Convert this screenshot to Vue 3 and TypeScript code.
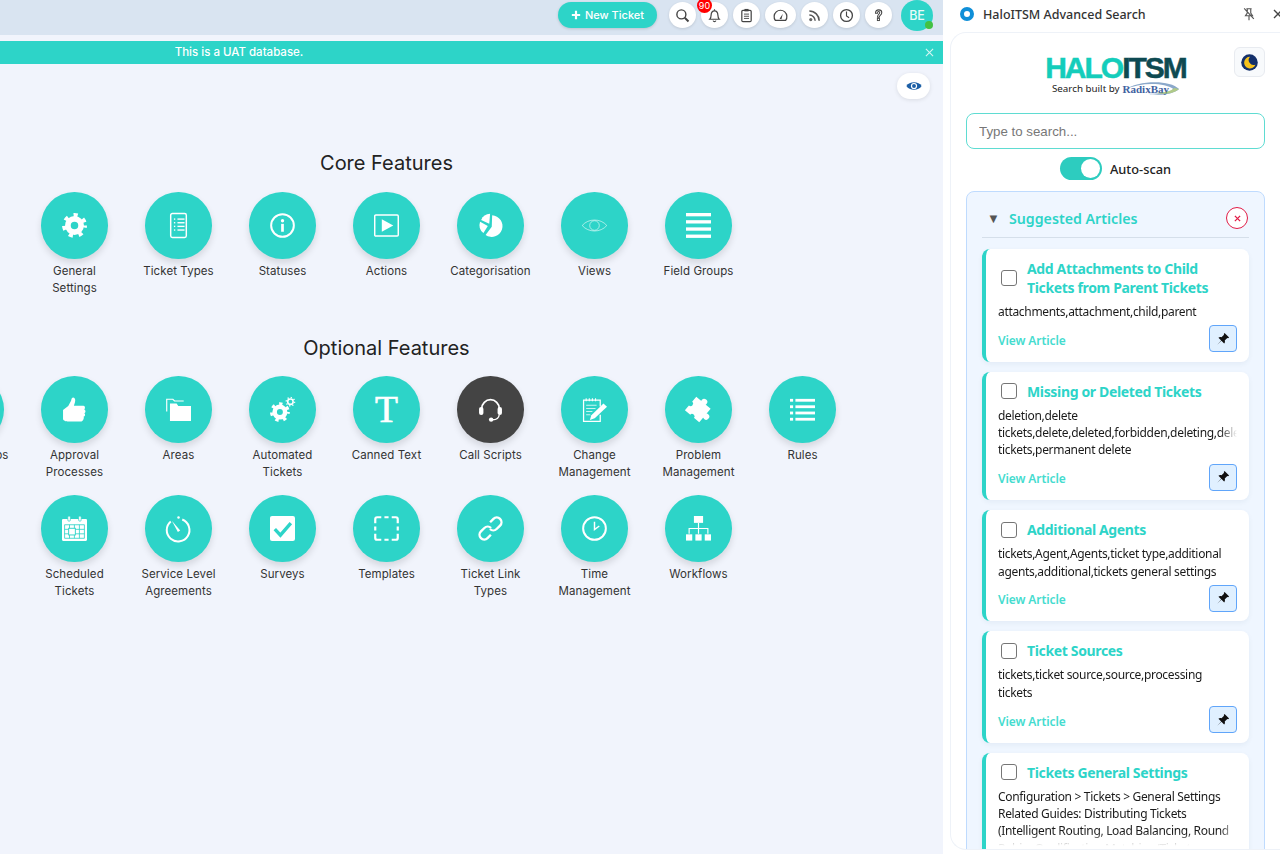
<script setup lang="ts">
// Tiles are drawn from one table; svg bodies live in `icons`
const gear = (cx: number, cy: number, r: number) => {
  const teeth = r * 1.32
  const dash = (2 * Math.PI * teeth) / 16
  return `<circle cx="${cx}" cy="${cy}" r="${r * 0.72}" fill="none" stroke="#fff" stroke-width="${r * 0.62}"/>
    <circle cx="${cx}" cy="${cy}" r="${teeth * 0.82}" fill="none" stroke="#fff" stroke-width="${r * 0.55}" stroke-dasharray="${dash * 0.82} ${dash * 1.18}" stroke-dashoffset="${dash * 0.41}"/>`
}

const listLines = (x: number, w: number, ys: number[], h = 1) =>
  ys
    .map(
      (y) =>
        `<rect x="${x}" y="${y}" width="${h + 0.4}" height="${h + 0.4}" fill="#fff"/><rect x="${x + 3.4}" y="${y}" width="${w}" height="${h + 0.4}" fill="#fff"/>`,
    )
    .join('')

const icons: Record<string, string> = {
  gear: gear(12, 12, 8.8),
  doc: `<rect x="4.5" y="0.500" width="15" height="23" rx="1.6" fill="none" stroke="#fff" stroke-width="1.4"/>${listLines(7.6, 6.8, [5.2, 8.7, 12.2, 15.7], 0.9)}`,
  info: `<circle cx="12" cy="12" r="10.9" fill="none" stroke="#fff" stroke-width="1.9"/><circle cx="12" cy="7.4" r="1.6" fill="#fff"/><rect x="10.7" y="10.4" width="2.6" height="7.6" fill="#fff"/>`,
  play: `<rect x="0.700" y="2" width="22.600" height="20" rx="1" fill="none" stroke="#fff" stroke-width="1.4"/><path d="M7.5 6 18.500 12 7.5 18Z" fill="#fff"/>`,
  pie: `<path d="M13.6 2.2A10.4 10.4 0 1 1 7.3 21.2L13.2 13.2Z" fill="#fff"/><path d="M11.6 0.6 10.8 10.4 3 6.6A9.8 9.8 0 0 1 11.6 0.6Z" fill="#fff"/><path d="M2 8.4 9.4 12.4 5.2 19.3A10 10 0 0 1 2 8.4Z" fill="#fff"/>`,
  eye: `<path d="M.2 12C6 5 18 5 23.8 12 18 19 6 19 .2 12Z" fill="none" stroke="#fff" stroke-opacity=".6" stroke-width=".9"/><circle cx="12" cy="12" r="4.6" fill="none" stroke="#fff" stroke-opacity=".6" stroke-width=".9"/>`,
  bars: `<rect x="0" y="0" width="24" height="3.200" fill="#fff"/><rect x="0" y="6.900" width="24" height="3.200" fill="#fff"/><rect x="0" y="13.800" width="24" height="3.200" fill="#fff"/><rect x="0" y="20.700" width="24" height="3.200" fill="#fff"/>`,
  thumb: `<path d="M1 12.5 6 8.6 8.7 3.5C9 1.6 9.7.4 10.8.4 12.6.6 13.2 3 12.4 5.2L11.4 8.4H20.6C22.4 8.6 22.4 11.2 21.4 12 23 12.8 22.800 15 21.500 15.500 22.700 16.400 22.200 18.500 20.800 18.800 21.400 20.400 20.200 23.400 18.600 23.400H6.500C3.600 23.400 1 22.600 1 21Z" fill="#fff"/>`,
  folders: `<path d="M.7 14V2.2H6.6L8.2 3.8H17" fill="none" stroke="#fff" stroke-width="1.1"/><path d="M3.8 23V6.2H10.2L11.8 8.6H24V23Z" fill="#fff"/>`,
  gears: `${gear(9.5, 14.5, 7)}<circle cx="19.6" cy="4.500" r="2.600" fill="none" stroke="#fff" stroke-width="1.500"/><circle cx="19.6" cy="4.500" r="4" fill="none" stroke="#fff" stroke-width="1.300" stroke-dasharray="1.2 1.9"/>`,
  serifT: `<text x="12" y="24" text-anchor="middle" font-family="Liberation Serif, serif" font-size="36" fill="#fff" stroke="#fff" stroke-width=".7">T</text>`,
  headset: `<path d="M3.600 15V11A8.400 8.400 0 0 1 20.400 11V15" fill="none" stroke="#fff" stroke-width="1.700"/><rect x="1" y="9.500" width="4.200" height="7.800" rx="2" fill="#fff"/><rect x="18.800" y="9.500" width="4.200" height="7.800" rx="2" fill="#fff"/><path d="M20.400 17C20 20.400 17.600 21.800 14 21.800" fill="none" stroke="#fff" stroke-width="1.300"/><circle cx="12.600" cy="21.700" r="2.100" fill="#fff"/>`,
  notepad: `<path d="M17.500 9V3H1.500V23.500H17.500V17" fill="none" stroke="#fff" stroke-width="1.200"/><path d="M4 1.200V4M7 1.200V4M10 1.200V4M13 1.200V4" stroke="#fff" stroke-width="1"/><path d="M4 8H14M4 11H13M4 14H10M4 17H8" stroke="#fff" stroke-opacity=".75" stroke-width="1"/><path d="M20.600 6.200 24 9.400 12.200 20.400 7.600 22 9 17.400Z" fill="#fff"/>`,
  puzzle: `<g transform="rotate(40 12 12)"><rect x="2.500" y="4" width="18" height="17" fill="#fff"/><circle cx="11.500" cy="3" r="3" fill="#fff"/><circle cx="22" cy="12.500" r="3" fill="#fff"/><circle cx="2.500" cy="12.500" r="2.400" fill="#2dd4c8"/><circle cx="11.500" cy="21" r="2.400" fill="#2dd4c8"/></g>`,
  list: `<rect x="0" y="1.800" width="3" height="2.700" fill="#fff"/><rect x="5.200" y="1.800" width="18.800" height="2.700" fill="#fff"/><rect x="0" y="8" width="3" height="2.700" fill="#fff"/><rect x="5.200" y="8" width="18.800" height="2.700" fill="#fff"/><rect x="0" y="14" width="3" height="2.700" fill="#fff"/><rect x="5.200" y="14" width="18.800" height="2.700" fill="#fff"/><rect x="0" y="20" width="3" height="2.700" fill="#fff"/><rect x="5.200" y="20" width="18.800" height="2.700" fill="#fff"/>`,
  calendar: `<path d="M1.500 2.800H22.500A1.300 1.300 0 0 1 24 4.200V22.400A1.300 1.300 0 0 1 22.500 24H1.500A1.300 1.300 0 0 1 0 22.400V4.200A1.300 1.300 0 0 1 1.500 2.800Z" fill="#fff"/><rect x="5.600" y="0" width="2.400" height="5" rx="1.100" fill="#fff" stroke="#2dd4c8" stroke-width=".7"/><rect x="16" y="0" width="2.400" height="5" rx="1.100" fill="#fff" stroke="#2dd4c8" stroke-width=".7"/><path d="M2.500 8.400H21.500V21.400H2.500ZM2.500 12.800H21.500M2.500 17.100H21.500M7.200 8.400V21.400M11.900 8.400V21.400M16.700 8.400V21.400" fill="none" stroke="#2dd4c8" stroke-width=".8"/><rect x="6.400" y="11.800" width="6.400" height="6.400" fill="#fff" stroke="#2dd4c8" stroke-width=".9"/>`,
  stopwatch: `<path d="M15.600 2.600A10.900 10.900 0 1 1 4.600 4.400" fill="none" stroke="#fff" stroke-width="1.900" transform="translate(0 .8)"/><circle cx="12" cy="1.500" r="1.200" fill="#fff"/><path d="M5.600 4.600 13.600 14 11.400 15.400Z" fill="#fff"/>`,
  check: `<rect x="0" y="0" width="24" height="24" rx="2" fill="#fff"/><path d="M4.600 12.600 10 18.400 20 6.800" fill="none" stroke="#2dd4c8" stroke-width="3.200"/>`,
  dashed: `<path d="M1.200 7V3A1.800 1.800 0 0 1 3 1.200H7M10 1.200H14M17 1.200H21A1.800 1.800 0 0 1 22.800 3V7M22.800 10V14M22.800 17V21A1.800 1.800 0 0 1 21 22.800H17M14 22.800H10M7 22.800H3A1.800 1.800 0 0 1 1.200 21V17M1.200 14V10" fill="none" stroke="#fff" stroke-width="2.100"/>`,
  link: `<g fill="none" stroke="#fff" stroke-width="2.300" transform="rotate(-45 12 12)"><path d="M12.700 12A4.500 4.500 0 0 0 8.200 7.500H3.500A4.500 4.500 0 0 0 3.500 16.500H8"/><path d="M11.300 12A4.500 4.500 0 0 0 15.800 16.500H20.500A4.500 4.500 0 0 0 20.500 7.500H16"/></g>`,
  clock: `<circle cx="12" cy="12" r="10.900" fill="none" stroke="#fff" stroke-width="1.900"/><path d="M12 5.400V13L16.600 9.600" fill="none" stroke="#fff" stroke-width="1.400"/>`,
  org: `<rect x="7.600" y="0" width="8.800" height="6.600" fill="#fff"/><path d="M12 6.600V12M3 17V12H21V17M12 12V17" fill="none" stroke="#fff" stroke-width="1.100"/><rect x="0" y="17.600" width="6" height="6" fill="#fff"/><rect x="9" y="17.600" width="6" height="6" fill="#fff"/><rect x="18" y="17.600" width="6" height="6" fill="#fff"/>`,
}

type Tile = { label: string; icon: string; dark?: boolean }

const coreFeatures: Tile[] = [
  { label: 'General Settings', icon: 'gear' },
  { label: 'Ticket Types', icon: 'doc' },
  { label: 'Statuses', icon: 'info' },
  { label: 'Actions', icon: 'play' },
  { label: 'Categorisation', icon: 'pie' },
  { label: 'Views', icon: 'eye' },
  { label: 'Field Groups', icon: 'bars' },
]

const optionalRows: Tile[][] = [
  [
    { label: 'Agent Groups', icon: 'gear' },
    { label: 'Approval Processes', icon: 'thumb' },
    { label: 'Areas', icon: 'folders' },
    { label: 'Automated Tickets', icon: 'gears' },
    { label: 'Canned Text', icon: 'serifT' },
    { label: 'Call Scripts', icon: 'headset', dark: true },
    { label: 'Change Management', icon: 'notepad' },
    { label: 'Problem Management', icon: 'puzzle' },
    { label: 'Rules', icon: 'list' },
  ],
  [
    { label: 'Scheduled Tickets', icon: 'calendar' },
    { label: 'Service Level Agreements', icon: 'stopwatch' },
    { label: 'Surveys', icon: 'check' },
    { label: 'Templates', icon: 'dashed' },
    { label: 'Ticket Link Types', icon: 'link' },
    { label: 'Time Management', icon: 'clock' },
    { label: 'Workflows', icon: 'org' },
  ],
]

const articles = [
  { title: 'Add Attachments to Child Tickets from Parent Tickets', tags: 'attachments,attachment,child,parent' },
  {
    title: 'Missing or Deleted Tickets',
    tags: 'deletion,delete tickets,delete,deleted,forbidden,deleting,deleted tickets,permanent delete',
  },
  { title: 'Additional Agents', tags: 'tickets,Agent,Agents,ticket type,additional agents,additional,tickets general settings' },
  { title: 'Ticket Sources', tags: 'tickets,ticket source,source,processing tickets' },
  {
    title: 'Tickets General Settings',
    tags: 'Configuration > Tickets > General Settings Related Guides: Distributing Tickets (Intelligent Routing, Load Balancing, Round Robin, Qualification Matching/Ticket Assignment)',
  },
]
</script>

<template>
  <div class="app">
    <main class="main">
      <header class="topbar">
        <button class="new-ticket" type="button">
          <svg viewBox="0 0 12 12" width="10" height="10"><path d="M6 1v10M1 6h10" stroke="#fff" stroke-width="2.600" /></svg>
          New Ticket
        </button>
        <div class="tools">
          <span class="tool">
            <svg viewBox="0 0 16 16"><circle cx="6.800" cy="6.800" r="4.800" fill="none" stroke="#444" stroke-width="1.500" /><path d="M10.400 10.400 14.400 14.400" stroke="#444" stroke-width="2" /></svg>
          </span>
          <span class="tool">
            <svg viewBox="0 0 16 16"><path d="M3 12c1.200-1.200 1.300-2.600 1.400-4.600C4.500 4.600 6 3 8 3s3.500 1.600 3.600 4.400c.1 2 .2 3.400 1.400 4.600Z" fill="none" stroke="#444" stroke-width="1.300" /><path d="M6.500 13.500a1.600 1.600 0 0 0 3 0M8 1.300V3" fill="none" stroke="#444" stroke-width="1.200" /></svg>
            <span class="badge">90</span>
          </span>
          <span class="tool">
            <svg viewBox="0 0 16 16"><rect x="3" y="2.500" width="10" height="12" rx="1.200" fill="none" stroke="#444" stroke-width="1.300" /><rect x="5.800" y="1" width="4.400" height="2.600" fill="#444" /><path d="M5.300 6.500h5.400M5.300 8.800h5.400M5.300 11.100h5.400" stroke="#444" stroke-width="1" /></svg>
          </span>
          <span class="tool wide">
            <svg viewBox="0 0 16 16"><path d="M2.500 13.200A6.800 6.800 0 1 1 13.500 13.200Z" fill="none" stroke="#444" stroke-width="1.300" /><path d="M7 11.500 10.500 6 9 12Z" fill="#444" /></svg>
          </span>
          <span class="tool">
            <svg viewBox="0 0 16 16"><circle cx="4" cy="12.300" r="1.700" fill="#666" /><path d="M2.500 7.500a6.200 6.200 0 0 1 6.200 6.200M2.500 3.200a10.500 10.500 0 0 1 10.500 10.500" fill="none" stroke="#555" stroke-width="1.600" /></svg>
          </span>
          <span class="tool">
            <svg viewBox="0 0 16 16"><circle cx="8" cy="8" r="6.300" fill="none" stroke="#444" stroke-width="1.400" /><path d="M8 3.800V8.500L10.800 10.300" fill="none" stroke="#444" stroke-width="1.200" /></svg>
          </span>
          <span class="tool">
            <svg viewBox="0 0 16 16"><path d="M4.800 5.600C4.800 3.300 6.400 2 8.200 2c2 0 3.300 1.300 3.300 3 0 2.500-2.700 2.700-2.700 4.800H6.900C6.900 7 9.300 6.500 9.300 5 9.300 4.300 8.800 3.800 8.100 3.800 7.300 3.800 6.900 4.500 6.900 5.600Z" fill="none" stroke="#444" stroke-width="1.100" /><rect x="6.800" y="11" width="2.200" height="2.400" fill="none" stroke="#444" stroke-width="1" /></svg>
          </span>
        </div>
        <span class="avatar">BE<i class="presence"></i></span>
      </header>

      <div class="uat-banner">
        <span>This is a UAT database.</span>
        <svg class="banner-close" viewBox="0 0 10 10" width="9" height="9"><path d="M1 1l8 8M9 1l-8 8" stroke="#d7f6f3" stroke-width="1.200" /></svg>
      </div>

      <div class="view-row">
        <span class="view-toggle">
          <svg viewBox="0 0 20 14" width="16" height="12"><path d="M.5 7C4 .8 16 .8 19.500 7 16 13.200 4 13.200.5 7Z" fill="#1c5fa6" /><circle cx="10" cy="7" r="3.900" fill="#fff" /><circle cx="10" cy="7" r="2.400" fill="#1c5fa6" /></svg>
        </span>
      </div>

      <section class="features">
        <h2>Core Features</h2>
        <div class="tile-row">
          <div v-for="tile in coreFeatures" :key="tile.label" class="tile">
            <span class="disc"><svg viewBox="0 0 24 24" v-html="icons[tile.icon]"></svg></span>
            <span class="tile-label">{{ tile.label }}</span>
          </div>
        </div>

        <h2 class="optional">Optional Features</h2>
        <div v-for="(row, i) in optionalRows" :key="i" class="tile-row">
          <div v-for="tile in row" :key="tile.label" class="tile">
            <span class="disc" :class="{ dark: tile.dark }"><svg viewBox="0 0 24 24" v-html="icons[tile.icon]"></svg></span>
            <span class="tile-label">{{ tile.label }}</span>
          </div>
        </div>
      </section>
    </main>

    <aside class="panel">
      <div class="panel-head">
        <span class="ext-icon"></span>
        <span class="ext-name">HaloITSM Advanced Search</span>
        <svg class="unpin" viewBox="0 0 16 16" width="14" height="14">
          <path d="M5 2h6M6 2v5L4 10h8L10 7V2M8 10v5M2.500 1.500l11 12" fill="none" stroke="#555" stroke-width="1.300" />
        </svg>
        <svg class="panel-close" viewBox="0 0 10 10" width="10" height="10"><path d="M1 1l8 8M9 1l-8 8" stroke="#444" stroke-width="1.400" /></svg>
      </div>

      <div class="panel-body">
        <div class="brand">
          <div class="logo">
            <div class="wordmark"><span class="halo">HALO</span><span class="itsm">ITSM</span></div>
            <div class="byline">
              Search built by
              <span class="radix">RadixBay<svg viewBox="0 0 60 14" width="58" height="14"><path d="M1 9C16-1 48-2 58 8 52 14 36 15 26 13 40 13 50 11 52 8 42 1 18 1 1 9Z" fill="#3f6fa8" /><path d="M34 12C44 12 50 10 53 7L58 8C52 13 42 14 34 12Z" fill="#7da83a" /></svg></span>
            </div>
          </div>
          <button class="theme-btn" type="button" aria-label="Toggle theme">
            <svg viewBox="0 0 16 16" width="17" height="17"><circle cx="8" cy="8" r="7.800" fill="#14306b" /><path d="M8.500 2.600A5.500 5.500 0 1 0 13.600 10 4.600 4.600 0 0 1 8.500 2.600Z" fill="#f6c21c" /></svg>
          </button>
        </div>

        <input class="search" type="text" placeholder="Type to search..." />

        <div class="autoscan">
          <span class="switch"><i></i></span>
          <span>Auto-scan</span>
        </div>

        <div class="suggested">
          <div class="suggested-head">
            <span class="caret">▼</span>
            <span class="suggested-title">Suggested Articles</span>
            <span class="dismiss">
              <svg viewBox="0 0 8 8" width="7" height="7"><path d="M1 1l6 6M7 1l-6 6" stroke="#e11d48" stroke-width="1.500" /></svg>
            </span>
          </div>

          <article v-for="article in articles" :key="article.title" class="card">
            <div class="card-title">
              <input type="checkbox" />
              <span>{{ article.title }}</span>
            </div>
            <p class="tags">{{ article.tags }}</p>
            <div class="card-foot">
              <span class="view-link">View Article</span>
              <button class="pin" type="button" aria-label="Pin">
                <svg viewBox="0 0 16 16" width="14" height="14"><path d="M9.800 1 15 6.200 13.800 7.100 12.900 6.800 10 9.700C10.500 11.200 10.200 12.300 9.300 13.200L6.200 10.100 1.500 14.500 5.900 9.800 2.800 6.700C3.700 5.800 4.800 5.500 6.300 6L9.200 3.100 8.900 2.200Z" fill="#111" /></svg>
              </button>
            </div>
          </article>
        </div>
      </div>
    </aside>
  </div>
</template>

<style scoped>
.app {
  display: flex;
  width: 1280px;
  height: 854px;
  overflow: hidden;
  font-family: Inter, "Liberation Sans", sans-serif;
}

.main {
  width: 943px;
  flex: none;
  background: #f1f4fc;
  overflow: hidden;
}

.topbar {
  display: flex;
  align-items: flex-start;
  justify-content: flex-end;
  height: 35px;
  padding-right: 10px;
  box-sizing: border-box;
  background: #d9e4f1;
}

.new-ticket {
  display: flex;
  align-items: center;
  gap: 4px;
  height: 26px;
  margin: 2px 12px 0 0;
  padding: 0 13px;
  border: none;
  border-radius: 13px;
  background: #2dd4c8;
  color: #fff;
  font: 500 11px Inter, sans-serif;
  box-shadow: 0 1px 3px rgba(0, 0, 0, 0.15);
}

.tools {
  display: flex;
  gap: 5px;
  margin-top: 2px;
}

.tool {
  position: relative;
  display: flex;
  align-items: center;
  justify-content: center;
  width: 27px;
  height: 26px;
  border-radius: 50%;
  background: #fff;
  box-shadow: 0 1px 3px rgba(0, 0, 0, 0.12);
}

.tool.wide {
  width: 31px;
}

.tool svg {
  width: 15px;
  height: 15px;
}

.badge {
  position: absolute;
  top: -4px;
  left: -4px;
  width: 15px;
  height: 15px;
  border-radius: 50%;
  background: #f00;
  color: #fff;
  font-size: 9px;
  line-height: 15px;
  text-align: center;
}

.avatar {
  position: relative;
  width: 32px;
  height: 31px;
  margin-left: 9px;
  border-radius: 50%;
  background: #2dd4c8;
  color: #e9fbf9;
  font-size: 12.500px;
  font-weight: 500;
  line-height: 31px;
  text-align: center;
}

.presence {
  position: absolute;
  right: 0;
  bottom: 2px;
  width: 8px;
  height: 8px;
  border-radius: 50%;
  background: #43c143;
}

.uat-banner {
  position: relative;
  height: 23px;
  margin-top: 6px;
  padding-right: 465px;
  background: #2dd4c8;
  color: #fff;
  font-size: 11.500px;
  font-weight: 500;
  line-height: 23px;
  text-align: center;
}

.banner-close {
  position: absolute;
  top: 7px;
  right: 9px;
}

.view-row {
  display: flex;
  justify-content: flex-end;
  height: 26px;
  margin-top: 9px;
  padding-right: 13px;
}

.view-toggle {
  display: flex;
  align-items: center;
  justify-content: center;
  width: 33px;
  height: 26px;
  border-radius: 13px;
  background: #fff;
  box-shadow: 0 1px 4px rgba(0, 0, 0, 0.1);
}

.features {
  width: 773px;
  padding-top: 50px;
}

h2 {
  margin: 0 0 15px;
  color: #222;
  font-size: 20px;
  font-weight: 400;
  line-height: 28px;
  text-align: center;
}

h2.optional {
  margin-top: 23px;
  margin-bottom: 14px;
}

.tile-row {
  display: flex;
  justify-content: center;
  height: 119px;
}

.tile {
  display: flex;
  flex: none;
  flex-direction: column;
  align-items: center;
  width: 104px;
}

.disc {
  display: flex;
  flex: none;
  align-items: center;
  justify-content: center;
  width: 66.500px;
  height: 66.500px;
  border-radius: 50%;
  background: #2dd4c8;
  box-shadow: 0 4px 7px rgba(0, 0, 0, 0.12);
}

.disc.dark {
  background: #444;
}

.disc svg {
  width: 25px;
  height: 25px;
  overflow: visible;
}

.tile-label {
  width: 84px;
  margin-top: 4.500px;
  color: #333;
  font-size: 11.500px;
  letter-spacing: 0.08px;
  line-height: 17px;
  text-align: center;
}

.panel {
  flex: none;
  width: 337px;
  background: #fff;
  font-family: "Noto Sans", "Open Sans", sans-serif;
}

.panel-head {
  position: relative;
  display: flex;
  align-items: center;
  height: 32px;
  padding: 0 0 4px 17px;
  box-sizing: border-box;
  color: #333;
  font-size: 12.500px;
  font-weight: 500;
}

.ext-icon {
  width: 6px;
  height: 6px;
  margin-right: 9px;
  border: 4px solid #0f8fd8;
  border-radius: 50%;
}

.unpin {
  position: absolute;
  top: 7px;
  left: 299px;
}

.panel-close {
  position: absolute;
  top: 9px;
  left: 330px;
}

.panel-body {
  position: relative;
  height: 818px;
  margin-left: 7px;
  padding: 14px 15px 0;
  box-sizing: border-box;
  overflow: hidden;
  border: 1px solid #eef2f8;
  border-right: none;
  border-radius: 16px 0 0 16px;
}

/* last card runs off the bottom and fades out */
.panel-body::after {
  content: "";
  position: absolute;
  right: 31px;
  bottom: 0;
  left: 36px;
  height: 16px;
  background: linear-gradient(to bottom, rgba(255, 255, 255, 0), #fff 80%);
}

.brand {
  position: relative;
  display: flex;
  justify-content: center;
  height: 66px;
}

.logo {
  margin-top: 7px;
  text-align: center;
}

.wordmark {
  font: 700 30px/28px "Liberation Sans", sans-serif;
  letter-spacing: -2px;
  -webkit-text-stroke: 0.5px currentColor;
}

.halo {
  color: #14cdbb;
}

.itsm {
  color: #0e4a52;
}

.byline {
  display: flex;
  align-items: center;
  justify-content: center;
  gap: 3px;
  color: #222;
  font-size: 9.800px;
  line-height: 14px;
}

.radix {
  position: relative;
  padding-right: 10px;
  color: #41619f;
  font: 700 11px "Liberation Serif", serif;
}

.radix svg {
  position: absolute;
  top: -2px;
  left: 0;
  opacity: 0.6;
}

.theme-btn {
  position: absolute;
  top: 0;
  right: 0;
  display: flex;
  align-items: center;
  justify-content: center;
  width: 31px;
  height: 30px;
  padding: 0;
  border: 1px solid #e8ebf0;
  border-radius: 6px;
  background: #f8fafc;
}

.search {
  display: block;
  width: 100%;
  height: 36px;
  padding: 0 12px;
  box-sizing: border-box;
  border: 1.500px solid #5fdcd2;
  border-radius: 8px;
  font: 13.300px "Liberation Sans", sans-serif;
  outline: none;
}

.search::placeholder {
  color: #777;
}

.autoscan {
  display: flex;
  align-items: center;
  justify-content: center;
  gap: 8px;
  height: 23px;
  margin: 8px 0 11px;
  color: #222;
  font-size: 12.800px;
  font-weight: 500;
}

.switch {
  position: relative;
  width: 42px;
  height: 23px;
  border-radius: 12px;
  background: #2dccbf;
}

.switch i {
  position: absolute;
  top: 2px;
  right: 2px;
  width: 19px;
  height: 19px;
  border-radius: 50%;
  background: #fff;
}

.suggested {
  padding: 15px;
  border: 1px solid #bfdbfe;
  border-radius: 8px;
  background: #eff6ff;
}

.suggested-head {
  display: flex;
  align-items: center;
  height: 31px;
  padding: 0 1px 7px 5px;
  box-sizing: border-box;
  margin-bottom: 11px;
  border-bottom: 1px solid #d5dfea;
}

.caret {
  width: 22px;
  color: #555;
  font-size: 13px;
  line-height: 13px;
}

.suggested-title {
  flex: 1;
  color: #2dd4c8;
  font-size: 14.200px;
  font-weight: 600;
}

.dismiss {
  display: flex;
  align-items: center;
  justify-content: center;
  align-self: flex-start;
  width: 22px;
  height: 22px;
  box-sizing: border-box;
  border: 1px solid #e11d48;
  border-radius: 50%;
  background: #fff;
}

.card {
  margin-bottom: 10px;
  padding: 10px 12px 9.500px;
  border-left: 4px solid #2dd4c8;
  border-radius: 8px;
  background: #fff;
  box-shadow: 0 2px 5px rgba(30, 60, 110, 0.06);
}

.card-title {
  display: flex;
  align-items: center;
  gap: 10px;
  color: #2dd4c8;
  font-size: 14px;
  font-weight: 700;
  letter-spacing: -0.35px;
  line-height: 19px;
}

.card-title input {
  flex: none;
  width: 16px;
  height: 16px;
  margin: 0 0 0 3px;
  appearance: none;
  border: 1.500px solid #767676;
  border-radius: 3px;
  background: #fff;
}

.tags {
  margin: 6px 0 5px;
  overflow: hidden;
  color: #1a1a1a;
  font-size: 12px;
  letter-spacing: -0.32px;
  line-height: 17.330px;
  -webkit-mask-image: linear-gradient(to right, #000 93%, transparent);
  mask-image: linear-gradient(to right, #000 93%, transparent);
}

.card-foot {
  display: flex;
  align-items: center;
  justify-content: space-between;
}

.view-link {
  padding-top: 3px;
  color: #45dccf;
  font-size: 12px;
  font-weight: 600;
  letter-spacing: -0.1px;
}

.pin {
  display: flex;
  align-items: center;
  justify-content: center;
  width: 28px;
  height: 27px;
  padding: 0;
  border: 1.500px solid #60a5fa;
  border-radius: 4px;
  background: #e0f0ff;
}
</style>

<style>
html,
body {
  margin: 0;
  background: #fff;
}
</style>
